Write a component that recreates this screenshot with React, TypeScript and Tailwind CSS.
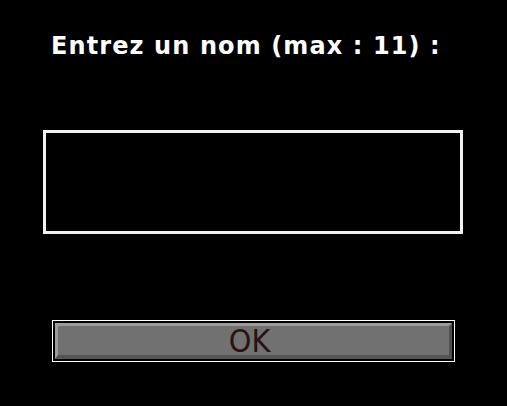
export default function App() {
  return (
    <div className="flex h-[406px] w-[507px] flex-col bg-black font-['DejaVu_Sans',sans-serif]">
      <h1 className="ml-[51px] mt-[32px] text-[24px] font-bold leading-[28px] tracking-[1.1px] text-white">
        Entrez un nom (max : 11) :
      </h1>
      <div className="ml-[43px] mt-[70px] h-[104px] w-[420px] border-[3px] border-[#f2f2f2] bg-black" />
      <div className="ml-[52px] mt-[86px] w-[403px] border border-white p-[2px]">
        <button className="flex h-[36px] w-full items-center justify-center border-b-[4px] border-l-[3px] border-r-[3px] border-t-[3px] border-b-[#555] border-l-[#9c9c9c] border-r-[#4e4e4e] border-t-[#9c9c9c] bg-[#717171] pr-[8px] font-['DejaVu_Sans_Condensed','DejaVu_Sans',sans-serif] text-[32px] leading-none text-[#2a1212]">
          OK
        </button>
      </div>
    </div>
  );
}
